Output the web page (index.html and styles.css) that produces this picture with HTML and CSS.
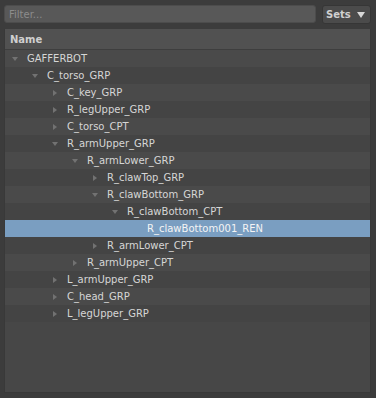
FILE: index.html
```html
<!DOCTYPE html>
<html lang="en">
<head>
  <meta charset="UTF-8" />
  <title>Scene Outliner</title>
  <link rel="stylesheet" href="styles.css">
</head>
<body>
  <div class="toolbar">
    <input class="filter" type="text" placeholder="Filter...">
    <button class="sets">Sets <span class="caret"></span></button>
  </div>

  <div class="tree">
    <div class="tree-header">Name</div>
    <ul class="rows">
      <li class="row" style="--depth: 0"><span class="arrow open"></span>GAFFERBOT</li>
      <li class="row" style="--depth: 1"><span class="arrow open"></span>C_torso_GRP</li>
      <li class="row" style="--depth: 2"><span class="arrow closed"></span>C_key_GRP</li>
      <li class="row" style="--depth: 2"><span class="arrow closed"></span>R_legUpper_GRP</li>
      <li class="row" style="--depth: 2"><span class="arrow closed"></span>C_torso_CPT</li>
      <li class="row" style="--depth: 2"><span class="arrow open"></span>R_armUpper_GRP</li>
      <li class="row" style="--depth: 3"><span class="arrow open"></span>R_armLower_GRP</li>
      <li class="row" style="--depth: 4"><span class="arrow closed"></span>R_clawTop_GRP</li>
      <li class="row" style="--depth: 4"><span class="arrow open"></span>R_clawBottom_GRP</li>
      <li class="row" style="--depth: 5"><span class="arrow open"></span>R_clawBottom_CPT</li>
      <li class="row selected" style="--depth: 6"><span class="arrow"></span>R_clawBottom001_REN</li>
      <li class="row" style="--depth: 4"><span class="arrow closed"></span>R_armLower_CPT</li>
      <li class="row" style="--depth: 3"><span class="arrow closed"></span>R_armUpper_CPT</li>
      <li class="row" style="--depth: 2"><span class="arrow closed"></span>L_armUpper_GRP</li>
      <li class="row" style="--depth: 2"><span class="arrow closed"></span>C_head_GRP</li>
      <li class="row" style="--depth: 2"><span class="arrow closed"></span>L_legUpper_GRP</li>
    </ul>
  </div>
</body>
</html>
```

FILE: styles.css
```css
* {
  margin: 0;
  padding: 0;
  box-sizing: border-box;
}

body {
  font-family: 'DejaVu Sans', sans-serif;
  font-size: 10px;
  background: #3c3c3c;
  color: #d6d6d6;
  padding: 5px 5px 5px 4px;
  height: 398px;
  display: flex;
  flex-direction: column;
}

.toolbar {
  display: flex;
  gap: 6px;
  height: 18px;
}

.filter {
  flex: 1;
  height: 18px;
  background: #585858;
  border: 1px solid #4c4c4c;
  border-radius: 3px;
  padding: 0 4px;
  font-family: inherit;
  font-size: 10px;
  color: #d6d6d6;
  outline: none;
}

.filter::placeholder {
  color: #8c8c8c;
}

.sets {
  width: 49px;
  height: 19px;
  background: #4b4b4b;
  border: 1px solid #363636;
  border-radius: 3px;
  font-family: inherit;
  font-size: 10px;
  font-weight: bold;
  color: #d0d0d0;
  display: flex;
  align-items: center;
  padding-left: 3px;
  gap: 6px;
}

.caret {
  width: 0;
  height: 0;
  border-left: 4px solid transparent;
  border-right: 4px solid transparent;
  border-top: 6px solid #d8d8d8;
}

.tree {
  flex: 1;
  margin-top: 6px;
  background: #474747;
  border: 1px solid #393939;
  border-top: none;
  display: flex;
  flex-direction: column;
}

.tree-header {
  height: 21px;
  line-height: 21px;
  padding-left: 5px;
  background: #515151;
  border-bottom: 1px solid #3e3e3e;
  font-weight: bold;
  color: #cfcfcf;
}

.rows {
  list-style: none;
}

.row {
  height: 17px;
  display: flex;
  align-items: center;
  padding-left: calc(7px + var(--depth) * 20px);
  background: #4a4a4a;
  white-space: nowrap;
}

.row:nth-child(even) {
  background: #444444;
}

.row.selected {
  background: #7a9ec1;
  color: #f4f4f4;
}

/* expand / collapse triangles */
.arrow {
  width: 6px;
  height: 6px;
  margin-right: 9px;
  flex: none;
}

.arrow.open {
  height: 0;
  border-left: 3px solid transparent;
  border-right: 3px solid transparent;
  border-top: 4px solid #727272;
}

.arrow.closed {
  width: 4px;
  height: 0;
  margin-left: 1px;
  margin-right: 10px;
  border-top: 3px solid transparent;
  border-bottom: 3px solid transparent;
  border-left: 4px solid #727272;
}
```
